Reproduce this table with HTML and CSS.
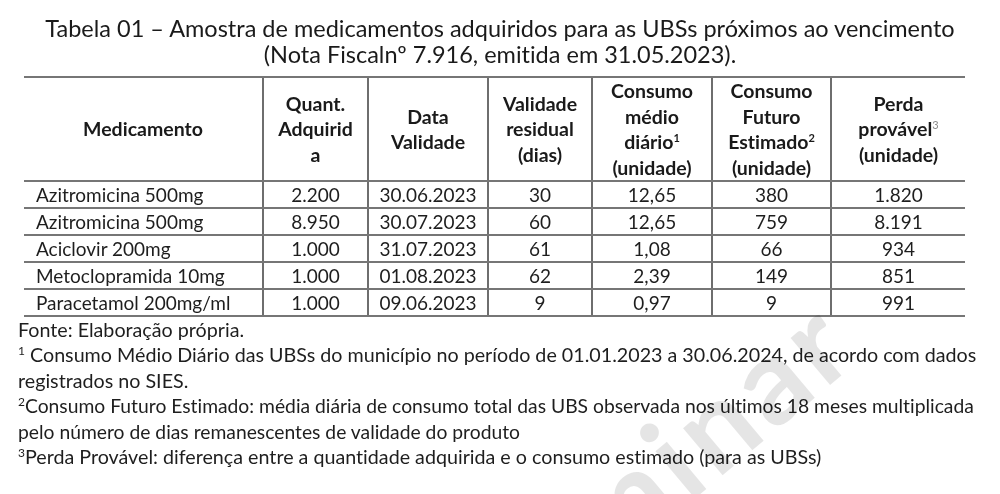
FILE: index.html
```html
<!DOCTYPE html>
<html lang="pt">
<head>
<meta charset="utf-8">
<title>Tabela 01</title>
<link rel="stylesheet" href="styles.css">
</head>
<body>
<div class="page">
  <h1 class="title">Tabela 01 – Amostra de medicamentos adquiridos para as UBSs próximos ao vencimento<br>(Nota Fiscalnº 7.916, emitida em 31.05.2023).</h1>
  <table class="meds">
    <colgroup>
      <col class="c1"><col class="c2"><col class="c3"><col class="c4"><col class="c5"><col class="c6"><col class="c7">
    </colgroup>
    <thead>
      <tr>
        <th>Medicamento</th>
        <th>Quant.<br>Adquirid<br>a</th>
        <th>Data<br>Validade</th>
        <th>Validade<br>residual<br>(dias)</th>
        <th>Consumo<br>médio<br>diário<sup>1</sup><br>(unidade)</th>
        <th>Consumo<br>Futuro<br>Estimado<sup>2</sup><br>(unidade)</th>
        <th>Perda<br>provável<sup class="light">3</sup><br>(unidade)</th>
      </tr>
    </thead>
    <tbody>
      <tr><td class="name">Azitromicina 500mg</td><td>2.200</td><td>30.06.2023</td><td>30</td><td>12,65</td><td>380</td><td>1.820</td></tr>
      <tr><td class="name">Azitromicina 500mg</td><td>8.950</td><td>30.07.2023</td><td>60</td><td>12,65</td><td>759</td><td>8.191</td></tr>
      <tr><td class="name">Aciclovir 200mg</td><td>1.000</td><td>31.07.2023</td><td>61</td><td>1,08</td><td>66</td><td>934</td></tr>
      <tr><td class="name">Metoclopramida 10mg</td><td>1.000</td><td>01.08.2023</td><td>62</td><td>2,39</td><td>149</td><td>851</td></tr>
      <tr><td class="name">Paracetamol 200mg/ml</td><td>1.000</td><td>09.06.2023</td><td>9</td><td>0,97</td><td>9</td><td>991</td></tr>
    </tbody>
  </table>
  <div class="notes">
    <p>Fonte: Elaboração própria.</p>
    <p><sup>1</sup> Consumo Médio Diário das UBSs do município no período de 01.01.2023 a 30.06.2024, de acordo com dados<br>registrados no SIES.</p>
    <p class="tight"><sup>2</sup>Consumo Futuro Estimado: média diária de consumo total das UBS observada nos últimos 18 meses multiplicada<br>pelo número de dias remanescentes de validade do produto</p>
    <p><sup>3</sup>Perda Provável: diferença entre a quantidade adquirida e o consumo estimado (para as UBSs)</p>
  </div>
  <div class="watermark">Preliminar</div>
</div>
</body>
</html>
```

FILE: styles.css
```css
html, body {
  margin: 0;
  padding: 0;
  background: #ffffff;
}

.page {
  position: relative;
  width: 1000px;
  height: 494px;
  overflow: hidden;
  font-family: "Lato", "Open Sans", sans-serif;
  font-variant-ligatures: none;
  color: #1e1e1e;
}

.title {
  margin: 0;
  padding-top: 16px;
  font-size: 23.5px;
  line-height: 25.5px;
  font-weight: 400;
  text-align: center;
  color: #1a1a1a;
}

.meds {
  margin: 9px 0 0 24px;
  width: 941px;
  border-collapse: collapse;
  table-layout: fixed;
  font-size: 19px;
}

.c1 { width: 239px; }
.c2 { width: 105px; }
.c3 { width: 120px; }
.c4 { width: 104px; }
.c5 { width: 120px; }
.c6 { width: 119px; }
.c7 { width: 134px; }

.meds th,
.meds td {
  border-top: 2px solid #767676;
  border-bottom: 2px solid #767676;
  border-left: 2px solid #6e6e6e;
  text-align: center;
  padding: 0;
}

.meds th:first-child,
.meds td:first-child {
  border-left: none;
}

.meds th {
  height: 101px;
  font-weight: 700;
  font-size: 19.5px;
  line-height: 25.5px;
  color: #1a1a1a;
}

.meds td {
  height: 25px;
  line-height: 25px;
}

.meds td.name {
  text-align: left;
  padding-left: 12px;
}

.meds sup {
  font-size: 11px;
  line-height: 0;
  vertical-align: 7px;
}

.meds sup.light {
  font-weight: 400;
  color: #8a8a8a;
}

.notes {
  padding-left: 18px;
  font-size: 19.7px;
  line-height: 25.4px;
  white-space: nowrap;
  color: #1e1e1e;
}

.notes p {
  margin: 0;
}

.notes p.tight {
  font-size: 19.3px;
  line-height: 25.4px;
}

.notes sup {
  font-size: 12px;
  line-height: 0;
  vertical-align: 7px;
}

.watermark {
  position: absolute;
  left: 400px;
  top: 640px;
  font-size: 120px;
  line-height: 1;
  font-weight: 700;
  letter-spacing: 6px;
  color: rgba(0, 0, 0, 0.1);
  mix-blend-mode: multiply;
  transform: rotate(-40deg);
  transform-origin: 0 106px;
  white-space: nowrap;
}
```
